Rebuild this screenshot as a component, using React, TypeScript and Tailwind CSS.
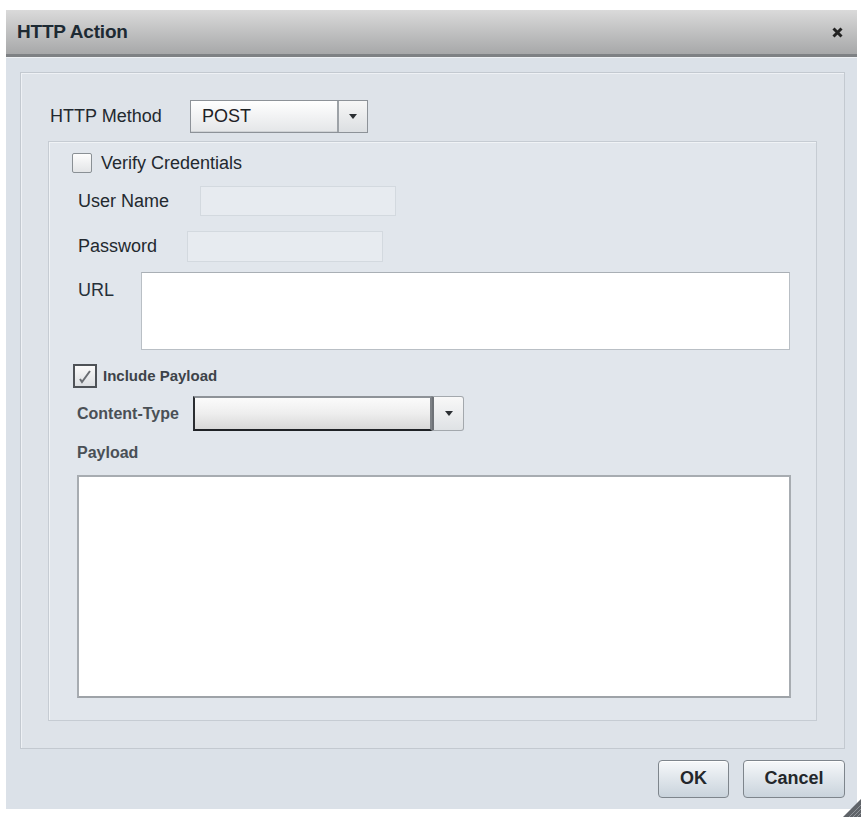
import React from 'react';

const Arrow = () => (
  <svg width="8" height="5" viewBox="0 0 8 5">
    <path d="M0 0 H8 L4 5 Z" fill="#2b2f33" />
  </svg>
);

const App = () => {
  return (
    <div className="min-h-screen bg-white pl-[6px] pt-[10px] font-['Liberation_Sans',Arial,sans-serif] text-[#23292f]">
      <div className="relative flex h-[799px] w-[851px] flex-col bg-[#dbe1e8]">
        {/* title bar */}
        <div className="flex h-[47px] shrink-0 items-center justify-between border-b-[3px] border-[#7e8184] bg-gradient-to-b from-[#dadada] to-[#a7a8a9] pl-[11px] pr-[14px]">
          <span className="text-[19px] font-bold tracking-[-0.2px] text-[#1d2a33]">HTTP Action</span>
          <svg width="11" height="11" viewBox="0 0 11 11" className="mt-[1px]">
            <path d="M1.5 1.5 L9.5 9.5 M9.5 1.5 L1.5 9.5" stroke="#222" strokeWidth="3" />
          </svg>
        </div>
        <div className="h-px bg-[#eef1f4]" />

        <div className="flex flex-1 flex-col pl-[14px] pr-[12px] pt-[14px]">
          {/* outer fieldset */}
          <div className="h-[677px] border border-[#c3c9d0] bg-[#dee3e9] px-[27px] pt-[27px] shadow-[inset_1px_1px_0_#eef1f5]">
            <div className="ml-[2px] flex h-[33px] items-center">
              <span className="w-[140px] text-[18px]">HTTP Method</span>
              <div className="flex h-[33px] w-[178px] border border-[#8d9298] bg-gradient-to-b from-[#ffffff] to-[#e4e6e8] shadow-[inset_0_-1px_0_#cfd2d5]">
                <span className="flex-1 pl-[11px] text-[18px] leading-[31px] text-[#1e2226]">POST</span>
                <span className="flex w-[30px] items-center justify-center border-l-2 border-[#9da2a7] bg-gradient-to-b from-[#f7f7f7] to-[#dcdfe2]">
                  <Arrow />
                </span>
              </div>
            </div>

            {/* inner fieldset */}
            <div className="mt-[8px] h-[580px] border border-[#c6ccd3] bg-[#e1e6ec] pl-[23px] pr-[26px] pt-[11px] shadow-[inset_1px_1px_0_#f0f3f6]">
              <div className="flex h-[20px] items-center gap-[9px]">
                <span className="h-[20px] w-[20px] rounded-[2px] border border-[#8a9095] bg-gradient-to-b from-[#fdfdfd] to-[#e3e5e7]" />
                <span className="text-[18px]">Verify Credentials</span>
              </div>

              <div className="ml-[6px] mt-[13px] flex h-[30px] items-center">
                <span className="w-[122px] text-[18px]">User Name</span>
                <span className="h-[30px] w-[196px] border border-[#d3d9df] bg-[#e7ebf0]" />
              </div>

              <div className="ml-[6px] mt-[15px] flex h-[31px] items-center">
                <span className="w-[109px] text-[18px]">Password</span>
                <span className="h-[31px] w-[196px] border border-[#d3d9df] bg-[#e7ebf0]" />
              </div>

              <div className="ml-[6px] mt-[10px] flex">
                <span className="w-[63px] pt-[8px] text-[18px] leading-[20px] text-[#263039]">URL</span>
                <span className="h-[78px] w-[650px] border border-[#b9bfc5] border-t-[#a9afb5] bg-white" />
              </div>

              <div className="ml-[1px] mt-[14px] flex h-[24px] items-center gap-[6px]">
                <span className="flex h-[24px] w-[24px] items-center justify-center border-2 border-[#4e5257] bg-gradient-to-b from-[#fafafa] to-[#dcdfe2]">
                  <svg width="16" height="16" viewBox="0 0 16 16">
                    <path d="M3 11 L5 14 L13 3" stroke="#6a6e73" strokeWidth="2" fill="none" />
                  </svg>
                </span>
                <span className="text-[15px] font-bold text-[#3d4349]">Include Payload</span>
              </div>

              <div className="ml-[5px] mt-[8px] flex h-[35px] items-center">
                <span className="w-[116px] text-[16px] font-bold text-[#4a5056]">Content-Type</span>
                <div className="flex h-[35px] w-[271px]">
                  <span className="w-[239px] border-2 border-b-[#1f2226] border-l-[#2a2d31] border-r-[#7d8186] border-t-[#8e9398] bg-gradient-to-b from-[#fbfbfb] via-[#eeeeee] to-[#d8d8d8]" />
                  <span className="flex w-[32px] items-center justify-center rounded-r-[3px] border border-l-2 border-[#a3a8ad] border-l-[#6e7277] bg-gradient-to-b from-[#f8f8f8] to-[#dfe2e5]">
                    <Arrow />
                  </span>
                </div>
              </div>

              <div className="ml-[5px] mt-[12px] text-[16px] font-bold leading-[20px] text-[#4a5056]">Payload</div>

              <div className="ml-[5px] mt-[12px] h-[223px] w-[714px] border-2 border-[#a7acb1] border-b-[#9ea3a8] bg-white" />
            </div>
          </div>

          {/* buttons */}
          <div className="flex flex-1 items-center justify-end gap-[14px] pb-[1px]">
            <button className="h-[38px] w-[71px] rounded-[4px] border border-[#7e858c] bg-gradient-to-b from-[#f6f8fa] to-[#c9d3dc] text-[18px] font-bold text-[#23272b] shadow-[inset_0_1px_0_#ffffff]">
              OK
            </button>
            <button className="h-[38px] w-[102px] rounded-[4px] border border-[#7e858c] bg-gradient-to-b from-[#f6f8fa] to-[#c9d3dc] text-[18px] font-bold text-[#23272b] shadow-[inset_0_1px_0_#ffffff]">
              Cancel
            </button>
          </div>
        </div>

        {/* resize grip */}
        <svg width="18" height="18" viewBox="0 0 18 18" className="absolute bottom-[-8px] right-[-4px]">
          <path d="M18 0 L18 18 L0 18 Z" fill="#5f6368" />
          <path d="M14 18 L18 14 M10 18 L18 10 M6 18 L18 6" stroke="#8f9398" strokeWidth="1" />
        </svg>
      </div>
    </div>
  );
};

export default App;
